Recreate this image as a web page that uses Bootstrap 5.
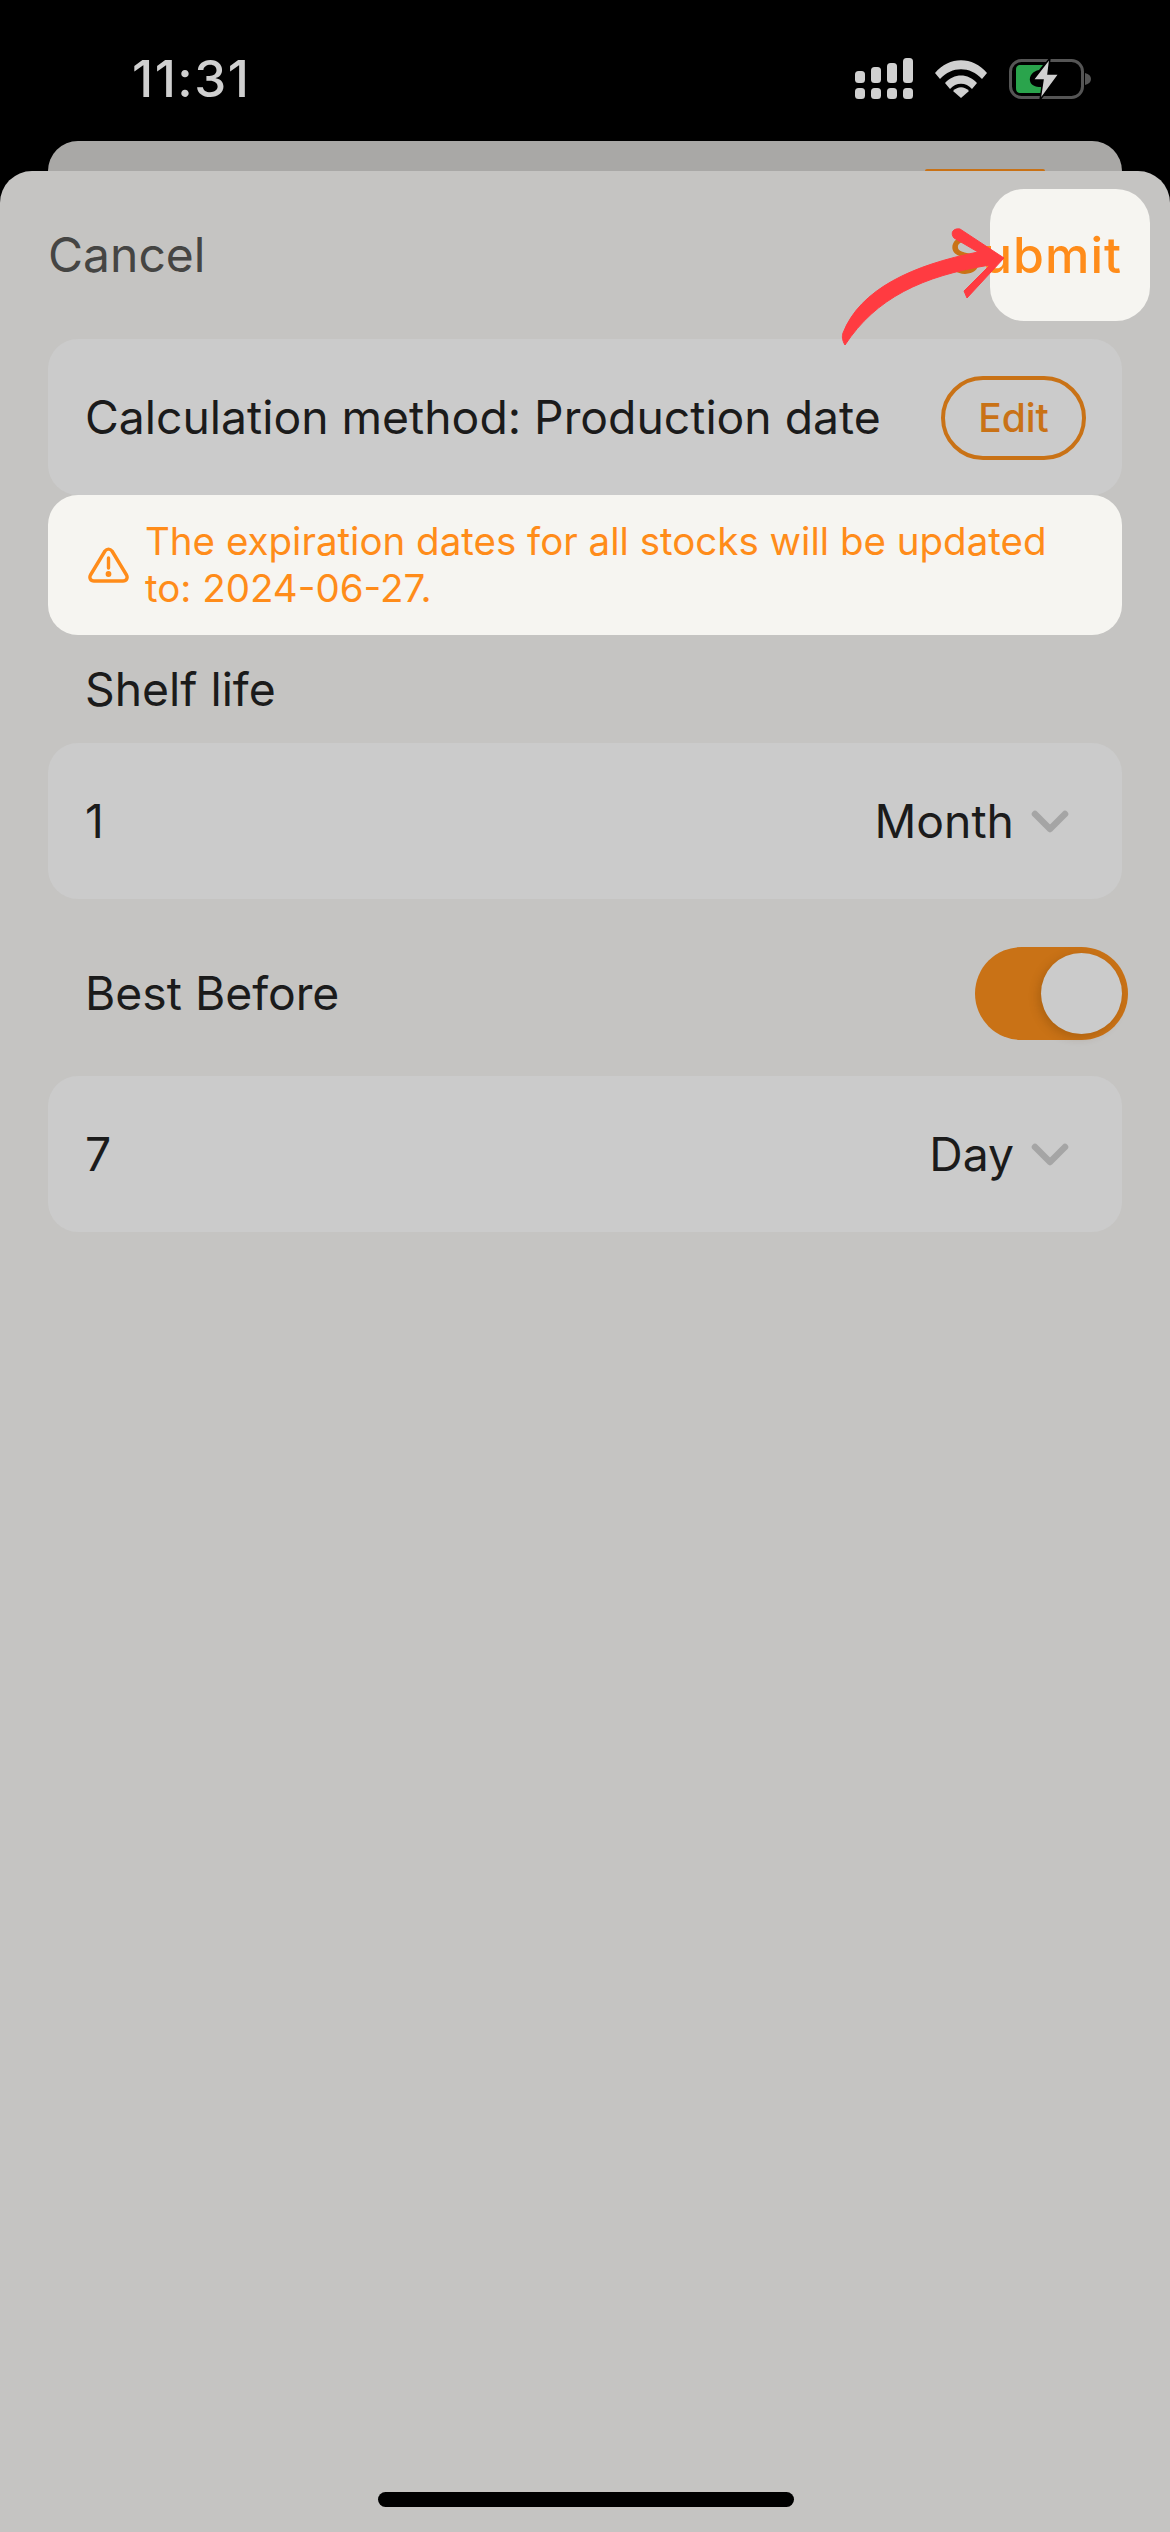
<!DOCTYPE html>
<html lang="en">

<head>
    <meta charset="UTF-8">
    <meta name="viewport" content="width=device-width, initial-scale=1.0">
    <title>Shelf life</title>
    <link href="https://cdn.jsdelivr.net/npm/bootstrap@5.3.1/dist/css/bootstrap.min.css" rel="stylesheet">
    <style>
        body { background: #000; font-family: Inter, "Liberation Sans", sans-serif; color: #1b1b1b; width: 1170px; height: 2532px; overflow: hidden; }
        .status-row { height: 141px; padding: 16px 79px 0 132px; color: #d0d0d0; }
        .status-time { font-size: 51px; font-weight: 500; line-height: 1; letter-spacing: 1.5px; }
        .status-icons { gap: 22px; }
        .back-sheet { height: 30px; margin: 0 48px; background: #a9a8a6; border-radius: 30px 30px 0 0; padding-right: 77px; }
        .back-btn { width: 120px; height: 2px; margin-top: 28px; background: #c97216; border-radius: 2px 2px 0 0; }
        .front-sheet { height: 2361px; padding: 0 50px 0 48px; background: #c5c4c2; border-radius: 32px 32px 0 0; }
        .sheet-head { height: 168px; margin-right: -2px; font-size: 48px; }
        .cancel-link { color: #454543; }
        .submit-link { position: relative; z-index: 2; font-size: 50px; font-weight: 500; letter-spacing: 1px; color: #ff8c1a; }
        .submit-link span { color: #c97216; }
        .spot-box { position: absolute; left: 990px; top: 189px; width: 160px; height: 132px; background: #f6f5f1; border-radius: 34px; z-index: 1; }
        .pointer-arrow { position: absolute; left: 800px; top: 30px; z-index: 3; }
        .field-box { height: 156px; margin-right: -2px; padding: 2px 36px 0 37px; background: #cbcbcb; border-radius: 30px; font-size: 46.3px; }
        .edit-pill { width: 145px; height: 84px; border: 4px solid #c97216; border-radius: 42px; color: #c97216; font-size: 39px; font-weight: 500; }
        .alert-box { height: 140px; margin-right: -2px; padding: 0 40px; background: #f6f5f1; border-radius: 30px; color: #ff8c1a; font-size: 38.5px; line-height: 47px; }
        .alert-box svg { margin-right: 16px; }
        .field-label { height: 108px; padding: 2px 0 0 37px; font-size: 46.3px; }
        .toggle-row { height: 177px; padding: 12px 0 0 37px; margin-right: -8px; font-size: 46.3px; }
        .toggle-track { width: 153px; height: 93px; padding: 6px; background: #c97216; border-radius: 47px; }
        .toggle-knob { width: 81px; height: 81px; background: #cbcbcb; border-radius: 50%; box-shadow: -3px 3px 10px rgba(90, 50, 0, .25); }
        .unit-text { margin-right: 17px; }
        .unit-chevron { margin-right: 17px; }
        .home-bar { position: absolute; left: 378px; top: 2492px; width: 416px; height: 15px; background: #000; border-radius: 8px; }
    </style>
</head>

<body>
    <!-- status bar -->
    <div class="status-row d-flex justify-content-between align-items-center">
        <div class="status-time">11:31</div>
        <div class="status-icons d-flex align-items-center">
            <svg width="58" height="41" viewBox="0 0 58 41" fill="#d0d0d0">
                <rect x="0" y="13" width="10" height="12" rx="3.5"/>
                <rect x="16" y="9" width="10" height="16" rx="3.5"/>
                <rect x="32" y="5" width="10" height="20" rx="3.5"/>
                <rect x="48" y="0" width="10" height="25" rx="3.5"/>
                <rect x="0" y="30" width="10" height="11" rx="3.5"/>
                <rect x="16" y="30" width="10" height="11" rx="3.5"/>
                <rect x="32" y="30" width="10" height="11" rx="3.5"/>
                <rect x="48" y="30" width="10" height="11" rx="3.5"/>
            </svg>
            <svg width="52" height="38" viewBox="0 0 52 38" fill="#d0d0d0">
                <path d="M0 13 C14 -4 38 -4 52 13 L47 19 C35 6 17 6 5 19 Z"/>
                <path d="M10 23 C19 13 33 13 42 23 L37 29 C31 22 21 22 15 29 Z"/>
                <path d="M18 31 C23 26 29 26 34 31 L26 38 Z"/>
            </svg>
            <svg width="82" height="42" viewBox="0 0 82 42">
                <rect x="1.5" y="2.5" width="72" height="37" rx="11" fill="none" stroke="#555" stroke-width="3"/>
                <path d="M76 15 C80 16 82 18 82 21 C82 24 80 26 76 27 Z" fill="#555"/>
                <path d="M12 7 H34 L30 12 C24 13 20 18 21 23 C22 27 26 29 32 29 L32 35 H12 C8 35 7 33 7 30 V12 C7 9 8 7 12 7 Z" fill="#2aa44c"/>
                <path d="M41 0 L24 22 H34 L31 42 L50 16 H39 Z" fill="#d0d0d0" stroke="#000" stroke-width="1.5"/>
            </svg>
        </div>
    </div>

    <!-- sheet underneath, only its top edge shows -->
    <div class="back-sheet d-flex justify-content-end">
        <div class="back-btn"></div>
    </div>

    <div class="front-sheet">
        <div class="sheet-head d-flex justify-content-between align-items-center">
            <span class="cancel-link">Cancel</span>
            <span class="submit-link"><span>S</span>ubmit</span>
        </div>

        <div class="field-box d-flex justify-content-between align-items-center">
            <span>Calculation method: Production date</span>
            <div class="edit-pill d-flex justify-content-center align-items-center">Edit</div>
        </div>

        <div class="alert-box d-flex align-items-center">
            <svg class="flex-shrink-0" width="41" height="36" viewBox="0 0 41 36" fill="none" stroke="#ff8c1a" stroke-width="3.4" stroke-linejoin="round">
                <path d="M17 4 C19 1.500 22 1.500 24 4 L38.500 28 C40 31 38.500 34 35 34 H6 C2.500 34 1 31 2.500 28 Z"/>
                <path d="M20.500 11 V21" stroke-linecap="round"/>
                <circle cx="20.500" cy="27" r="1.200" fill="#ff8c1a"/>
            </svg>
            <div>The expiration dates for all stocks will be updated to: 2024-06-27.</div>
        </div>

        <div class="field-label d-flex align-items-center">Shelf life</div>

        <div class="field-box d-flex justify-content-between align-items-center">
            <span>1</span>
            <div class="d-flex align-items-center">
                <span class="unit-text">Month</span>
                <svg class="unit-chevron" width="38" height="24" viewBox="0 0 38 24" fill="none" stroke="#a5a5a5" stroke-width="6.500" stroke-linecap="round" stroke-linejoin="round"><path d="M4 4 L19 19 L34 4"/></svg>
            </div>
        </div>

        <div class="toggle-row d-flex justify-content-between align-items-center">
            <span>Best Before</span>
            <div class="toggle-track d-flex justify-content-end">
                <div class="toggle-knob"></div>
            </div>
        </div>

        <div class="field-box d-flex justify-content-between align-items-center">
            <span>7</span>
            <div class="d-flex align-items-center">
                <span class="unit-text">Day</span>
                <svg class="unit-chevron" width="38" height="24" viewBox="0 0 38 24" fill="none" stroke="#a5a5a5" stroke-width="6.500" stroke-linecap="round" stroke-linejoin="round"><path d="M4 4 L19 19 L34 4"/></svg>
            </div>
        </div>
    </div>

    <!-- highlight over the submit action -->
    <div class="spot-box"></div>
    <svg class="pointer-arrow" width="370" height="320" viewBox="0 0 370 320">
        <path fill="#ff3b41" stroke="#ff3b41" stroke-width="1" stroke-linejoin="round" d="M45 315 C42 310 42 306 43 303 C60 259 113 235 178 222 L154 208 C150 203 153 198 160 199 L204 228 L167 268 L164 261 L190 235 C122 246 76 268 45 315 Z"/>
    </svg>

    <div class="home-bar"></div>

    <script src="https://cdn.jsdelivr.net/npm/bootstrap@5.3.1/dist/js/bootstrap.bundle.min.js"></script>
</body>

</html>
